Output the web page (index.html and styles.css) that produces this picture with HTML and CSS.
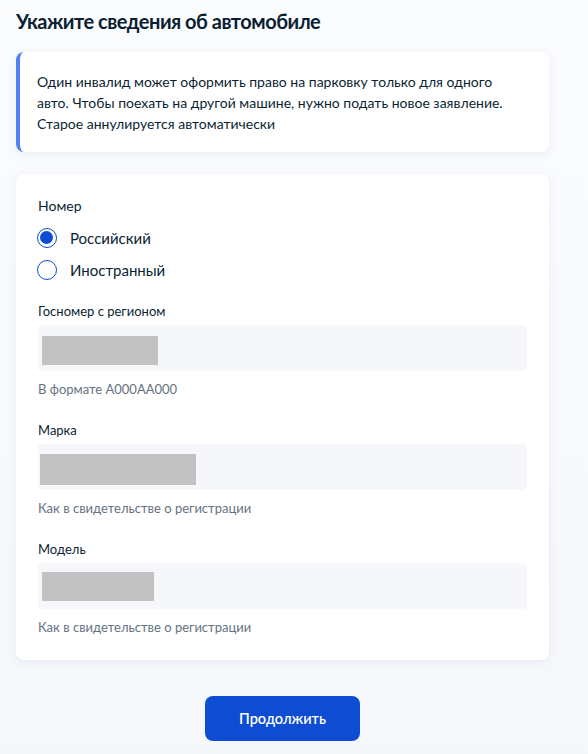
FILE: index.html
```html
<!DOCTYPE html>
<html lang="ru">
<head>
<meta charset="utf-8">
<title>Сведения об автомобиле</title>
<link rel="stylesheet" href="styles.css">
</head>
<body>
<main class="page">
  <h1 class="title">Укажите сведения об автомобиле</h1>

  <div class="info">
    Один инвалид может оформить право на парковку только для одного авто. Чтобы поехать на другой машине, нужно подать новое заявление. Старое аннулируется автоматически
  </div>

  <form class="card">
    <div class="group-label">Номер</div>
    <div class="radios">
      <label class="radio">
        <span class="radio-mark checked"></span>
        <span class="radio-text">Российский</span>
      </label>
      <label class="radio">
        <span class="radio-mark"></span>
        <span class="radio-text">Иностранный</span>
      </label>
    </div>

    <div class="field field-first">
      <div class="field-label">Госномер с регионом</div>
      <div class="input input-a"><span class="mask" style="width:116px"></span></div>
      <div class="hint">В формате А000АА000</div>
    </div>

    <div class="field">
      <div class="field-label">Марка</div>
      <div class="input input-b"><span class="mask" style="width:156px"></span></div>
      <div class="hint">Как в свидетельстве о регистрации</div>
    </div>

    <div class="field">
      <div class="field-label">Модель</div>
      <div class="input input-c"><span class="mask" style="width:112px"></span></div>
      <div class="hint">Как в свидетельстве о регистрации</div>
    </div>
  </form>

  <div class="actions">
    <button class="btn" type="button">Продолжить</button>
  </div>
</main>
</body>
</html>
```

FILE: styles.css
```css
* { box-sizing: border-box; }

html, body {
  margin: 0;
  padding: 0;
}

body {
  background: linear-gradient(180deg, #fbfcfe 0%, #f5f7fb 100%);
  min-height: 754px;
  font-family: Lato, "Noto Sans", Arial, sans-serif;
  color: #0b1f33;
}

.page {
  width: 533px;
  margin-left: 16px;
  padding-top: 7px;
  padding-bottom: 13px;
}

.title {
  margin: 0;
  font-size: 20px;
  line-height: 28px;
  font-weight: 700;
  letter-spacing: -0.5px;
  color: #0b1f33;
}

.info {
  margin-top: 17px;
  background: #ffffff;
  border-left: 4px solid #4f81f2;
  border-radius: 8px;
  padding: 19px 24px 18px 17px;
  font-size: 14px;
  line-height: 21px;
  color: #0b1f33;
  box-shadow: 0 2px 10px rgba(100, 120, 170, 0.10);
}

.card {
  margin-top: 22px;
  background: #ffffff;
  border-radius: 8px;
  padding: 22px 22px 24px 22px;
  box-shadow: 0 2px 10px rgba(100, 120, 170, 0.10);
  display: flex;
  flex-direction: column;
}

.group-label {
  font-size: 14px;
  line-height: 20px;
}

.radios {
  margin-top: 10px;
  display: flex;
  flex-direction: column;
  gap: 8px;
}

.radio {
  display: flex;
  align-items: center;
  height: 24px;
}

.radio-mark {
  width: 20px;
  height: 20px;
  border-radius: 50%;
  border: 1.5px solid #0d4cd3;
  background: #fff;
  flex: none;
  margin-left: -1px;
  position: relative;
}

.radio-mark.checked::after {
  content: "";
  position: absolute;
  left: 2px;
  top: 2px;
  width: 13px;
  height: 13px;
  border-radius: 50%;
  background: #0d4cd3;
}

.radio-text {
  margin-left: 13px;
  font-size: 15px;
  line-height: 24px;
  color: #0b1f33;
}

.field {
  margin-top: 23px;
  display: flex;
  flex-direction: column;
}

.field-first {
  margin-top: 20px;
}

.field-label {
  font-size: 13px;
  line-height: 18px;
  color: #0b1f33;
}

.input {
  margin-top: 5px;
  height: 46px;
  background: #f5f7fa;
  border-radius: 4px;
  padding: 11px 0 0 4px;
}

.input-b { padding-top: 10px; padding-left: 2px; }
.input-c { padding-top: 9px; padding-left: 4px; }

.mask {
  display: block;
  height: 29px;
  background: #c2c2c2;
}

.input-b .mask { height: 31px; }

.hint {
  margin-top: 9px;
  font-size: 13px;
  line-height: 18px;
  color: #66727f;
}

.actions {
  margin-top: 36px;
  display: flex;
  justify-content: center;
}

.btn {
  width: 155px;
  height: 45px;
  border: none;
  border-radius: 8px;
  background: #0d4cd3;
  color: #ffffff;
  font-family: Lato, "Noto Sans", Arial, sans-serif;
  font-size: 14.5px;
  font-weight: 600;
  cursor: pointer;
}
```
